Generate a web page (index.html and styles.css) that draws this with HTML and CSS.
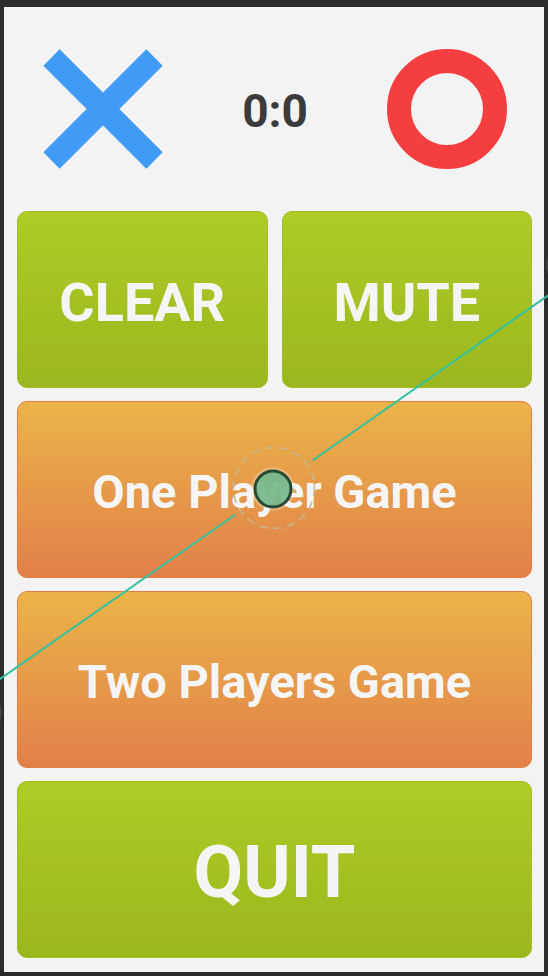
FILE: index.html
```html
<!DOCTYPE html>
<html lang="en">
<head>
<meta charset="utf-8">
<title>Tic Tac Toe</title>
<link rel="stylesheet" href="styles.css">
</head>
<body>
<div class="screen">
  <header class="score">
    <svg class="mark" viewBox="0 0 120 120" aria-label="X player">
      <path d="M8.5 8.5 L111.5 111.5 M111.5 8.5 L8.5 111.5" stroke="#409bf5" stroke-width="23" fill="none"/>
    </svg>
    <div class="tally">0:0</div>
    <svg class="mark" viewBox="0 0 120 120" aria-label="O player">
      <circle cx="60" cy="60" r="48" fill="none" stroke="#f53e3f" stroke-width="24"/>
    </svg>
  </header>
  <div class="pair">
    <button class="btn green small">CLEAR</button>
    <button class="btn green small">MUTE</button>
  </div>
  <button class="btn orange mode">One Player Game</button>
  <button class="btn orange mode">Two Players Game</button>
  <button class="btn green big">QUIT</button>
</div>

<svg class="gesture" width="548" height="976" viewBox="0 0 548 976" aria-hidden="true">
  <defs>
    <radialGradient id="blob" cx="50%" cy="50%" r="50%">
      <stop offset="0" stop-color="#9a9a9a" stop-opacity="0.5"/>
      <stop offset="0.75" stop-color="#d8d8d8" stop-opacity="0.9"/>
      <stop offset="1" stop-color="#555" stop-opacity="0"/>
    </radialGradient>
    <radialGradient id="halo" cx="50%" cy="50%" r="50%">
      <stop offset="0.7" stop-color="#fff" stop-opacity="0.7"/>
      <stop offset="1" stop-color="#fff" stop-opacity="0"/>
    </radialGradient>
  </defs>
  <circle cx="572" cy="265" r="27" fill="url(#blob)"/>
  <circle cx="-24" cy="713" r="27" fill="url(#blob)"/>
  <line x1="-10" y1="686" x2="235.5" y2="514.5" stroke="#33c2a0" stroke-width="2"/>
  <line x1="312.5" y1="460.5" x2="560" y2="287" stroke="#33c2a0" stroke-width="2"/>
  <circle cx="274" cy="488" r="40.5" fill="none" stroke="#c4b894" stroke-opacity="0.9" stroke-width="1.8" stroke-dasharray="8 6"/>
  <circle cx="273" cy="489" r="23" fill="url(#halo)"/>
  <circle cx="273" cy="489" r="18" fill="#5fae78" fill-opacity="0.8" stroke="#264a34" stroke-width="3"/>
</svg>
</body>
</html>
```

FILE: styles.css
```css
html, body {
  margin: 0;
  padding: 0;
}

body {
  background: #2c2c2c;
  width: 548px;
  height: 976px;
  overflow: hidden;
  position: relative;
  font-family: Roboto, "Noto Sans", sans-serif;
}

.screen {
  box-sizing: border-box;
  margin: 7px 4px 4px 4px;
  height: 965px;
  background: #f3f3f3;
  padding: 13px 12px 13px 13px;
  display: grid;
  grid-template-rows: 178px 177px 177px 177px 177px;
  row-gap: 13px;
}

.score {
  display: flex;
  align-items: center;
  justify-content: space-between;
  padding: 0 25px 0 26px;
}

.mark {
  width: 120px;
  height: 120px;
  display: block;
}

.tally {
  font-weight: 700;
  font-size: 46px;
  color: #3b3b3b;
  line-height: 1;
  padding-top: 4px;
}

.pair {
  display: grid;
  grid-template-columns: 1fr 1fr;
  column-gap: 14px;
}

.btn {
  box-sizing: border-box;
  width: 100%;
  height: 100%;
  margin: 0;
  border-radius: 10px;
  font-family: Roboto, "Noto Sans", sans-serif;
  font-weight: 700;
  color: #f5f5f5;
  display: flex;
  align-items: center;
  justify-content: center;
  padding: 0;
  line-height: 1;
}

.green {
  background: linear-gradient(to bottom, #adcc24, #9bb71f);
  border: 1px solid #a2be21;
}

.orange {
  background: linear-gradient(to bottom, #eab448, #e2804a);
  border: 1px solid #e57d3e;
}

.small {
  font-size: 54px;
  padding-top: 6px;
}

.mode {
  font-size: 47px;
  padding-top: 4px;
}

.big {
  font-size: 72px;
  padding-top: 6px;
}

.gesture {
  position: absolute;
  left: 0;
  top: 0;
  pointer-events: none;
  overflow: visible;
}
```
